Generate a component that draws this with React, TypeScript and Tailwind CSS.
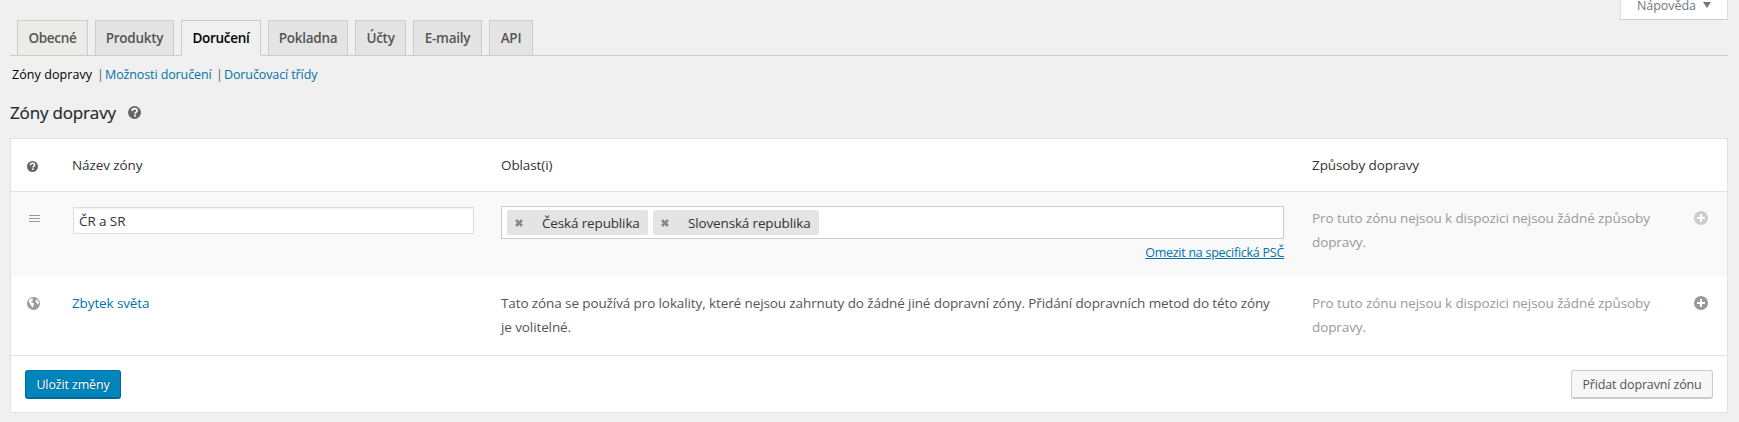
interface Tab {
  label: string;
  className: string;
}

const TABS: Tab[] = [
  { label: "Obecné", className: "w-[71px] bg-[#ebebe8] text-[#555]" },
  { label: "Produkty", className: "w-[79px] bg-[#e4e4e4] text-[#555]" },
  { label: "Doručení", className: "w-20 bg-[#f0f0f0] text-black border-b-[#f0f0f0]" },
  { label: "Pokladna", className: "w-20 bg-[#e4e4e4] text-[#555]" },
  { label: "Účty", className: "w-[51px] bg-[#e4e4e4] text-[#555]" },
  { label: "E-maily", className: "w-[69px] bg-[#e4e4e4] text-[#555]" },
  { label: "API", className: "w-11 bg-[#e4e4e4] text-[#555]" },
];

const REGIONS = [
  { name: "Česká republika", className: "w-[141px]" },
  { name: "Slovenská republika", className: "w-[166px]" },
];

function HelpIcon({ className }: { className: string }) {
  return (
    <svg viewBox="0 0 16 16" className={className}>
      <circle cx="8" cy="8" r="8" fill="#666" />
      <path d="M5 6.200C5 4.200 6.300 3.300 8.100 3.300s3 1 3 2.600c0 2-2.500 2-2.500 3.700" fill="none" stroke="#fff" strokeWidth="2.100" />
      <rect x="7.400" y="10.700" width="2.300" height="2.300" fill="#fff" />
    </svg>
  );
}

function PlusIcon({ className }: { className: string }) {
  return (
    <svg viewBox="0 0 14 14" className={className}>
      <circle cx="7" cy="7" r="7" fill="currentColor" />
      <path d="M7 3v8M3 7h8" stroke="#fff" strokeWidth="2" />
    </svg>
  );
}

function GlobeIcon() {
  return (
    <svg viewBox="0 0 13 13" className="h-[13px] w-[13px]">
      <circle cx="6.500" cy="6.500" r="6.500" fill="#999" />
      <path d="M1.300 4.400L2.600 2.400l1.800-1.100h1.500L5.200 2.300l1.200.5-1.300 1.400-1 .2.300 1h1.400l1.400 1.500-.7 1.500L5 11.300 4.400 8.800 2.900 7.100 2.300 5.200z" fill="#fff" />
      <path d="M9 2.500l1.400.3 1.500 2.500-.2 1.800-1 .5-.5-1.400-1.300-.6-.4-1.400z" fill="#fff" />
    </svg>
  );
}

function NoMethods() {
  return (
    <p className="w-[350px] leading-6 tracking-[-0.09px] text-[#999]">
      Pro tuto zónu nejsou k dispozici nejsou žádné způsoby
      <br />
      dopravy.
    </p>
  );
}

export default function App() {
  return (
    <div className="h-[422px] w-full overflow-hidden whitespace-nowrap bg-[#f0f0f0] pl-2.5 pr-[11px] font-['Open_Sans',sans-serif] text-[#333]">
      {/* Help toggle */}
      <div className="flex h-5 justify-end">
        <button className="flex h-5 w-[108px] items-start border border-t-0 border-[#ddd] border-b-[#ccc] bg-white pl-4 text-[12.5px] leading-[12px] tracking-[-0.05px] text-[#72777c]">
          <span className="w-[66px] text-left">Nápověda</span>
          <svg viewBox="0 0 8 6" className="mt-0.5 h-1.5 w-2">
            <path d="M0 0h8L4 6z" fill="#72777c" />
          </svg>
        </button>
      </div>

      {/* Tabs */}
      <nav className="flex h-9 gap-[7px] border-b border-[#ccc] pl-[7px]">
        {TABS.map((tab) => (
          <a
            key={tab.label}
            className={`h-9 shrink-0 border border-[#ccc] text-center text-[13.5px] font-semibold leading-[35px] tracking-[-0.27px] ${tab.className}`}
          >
            {tab.label}
          </a>
        ))}
      </nav>

      <ul className="mt-2 flex h-5 pl-0.5 text-[12.5px] leading-[21px] tracking-[-0.11px]">
        <li className="w-[85px] tracking-[0.07px] text-black">Zóny dopravy</li>
        <li className="flex w-[119px] text-[#0073aa]">
          <span className="w-2 text-[#666]">|</span>Možnosti doručení
        </li>
        <li className="flex text-[#0073aa]">
          <span className="w-2 text-[#666]">|</span>Doručovací třídy
        </li>
      </ul>

      <h2 className="mt-[17px] flex h-6 items-center text-[17px] font-medium leading-6 tracking-[-0.16px] text-[#23282d] [-webkit-text-stroke:0.2px_#23282d]">
        <span className="w-[118px]">Zóny dopravy</span>
        <HelpIcon className="-mt-px h-[13px] w-[13px]" />
      </h2>

      {/* Zones table */}
      <section className="mt-[13px] h-[275px] border border-[#e2e2e2] bg-white text-[13.5px]">
        <div className="flex h-[53px] border-b border-[#e1e1e1] leading-[53px] tracking-[-0.1px]">
          <div className="flex w-[61px] items-center pl-4">
            <HelpIcon className="mt-[3px] h-[11px] w-[11px]" />
          </div>
          <div className="w-[429px]">Název zóny</div>
          <div className="w-[811px]">Oblast(i)</div>
          <div>Způsoby dopravy</div>
        </div>

        <div className="flex h-[85px] bg-[#f9f9f9]">
          <div className="w-[61px] pl-[18px] pt-[23px]">
            <svg viewBox="0 0 11 7" className="h-[7px] w-[11px]">
              <path d="M0 .5h11M0 3.500h11M0 6.500h11" stroke="#999" />
            </svg>
          </div>
          <div className="w-[429px] pl-px pt-[15px]">
            <div className="h-[27px] w-[401px] border border-[#ddd] bg-white pl-[5px] leading-[27px] tracking-[-0.1px] shadow-[inset_0_1px_2px_rgba(0,0,0,0.07)]">
              ČR a SR
            </div>
          </div>
          <div className="w-[811px] pt-3.5">
            <div className="flex h-[33px] w-[783px] gap-[5px] border border-[#ccc] bg-white pl-[5px] pt-[3px]">
              {REGIONS.map((region) => (
                <div
                  key={region.name}
                  className={`flex h-[25px] items-center rounded-[2px] bg-[#e4e4e4] pl-2 leading-[26px] tracking-[-0.15px] ${region.className}`}
                >
                  <svg viewBox="0 0 8 8" className="mr-[19px] h-2 w-2">
                    <path d="M1 1l6 6M7 1L1 7" stroke="#888" strokeWidth="2.500" />
                  </svg>
                  {region.name}
                </div>
              ))}
            </div>
            <a className="block h-5 w-[783px] pt-1 text-right text-[12.5px] leading-5 tracking-[-0.26px] text-[#0073aa] underline">
              Omezit na specifická PSČ
            </a>
          </div>
          <div className="w-[382px] pt-3.5">
            <NoMethods />
          </div>
          <PlusIcon className="mt-[19px] h-3.5 w-3.5 text-[#ccc]" />
        </div>

        <div className="flex h-[79px] border-b border-[#e1e1e1]">
          <div className="w-[61px] pl-4 pt-5">
            <GlobeIcon />
          </div>
          <div className="w-[429px] pt-3.5 leading-6 tracking-[-0.12px] text-[#0073aa]">Zbytek světa</div>
          <p className="w-[811px] pt-3.5 leading-6 tracking-[-0.105px] text-[#555]">
            Tato zóna se používá pro lokality, které nejsou zahrnuty do žádné jiné dopravní zóny. Přidání dopravních metod do této zóny
            <br />
            je volitelné.
          </p>
          <div className="w-[382px] pt-3.5">
            <NoMethods />
          </div>
          <PlusIcon className="mt-[19px] h-3.5 w-3.5 text-[#999]" />
        </div>

        <div className="flex justify-between px-3.5 pt-3.5 text-[12.5px] tracking-[-0.14px]">
          <button className="h-[29px] w-24 rounded-[3px] border border-b-2 border-[#006799] border-t-[#0073aa] bg-[#0085ba] pt-px leading-[26px] text-white [text-shadow:0_-1px_1px_#006799,1px_0_1px_#006799]">
            Uložit změny
          </button>
          <button className="h-[29px] w-[142px] rounded-[3px] border border-b-2 border-[#ccc] bg-[#f7f7f7] pt-px leading-[26px] text-[#555]">
            Přidat dopravní zónu
          </button>
        </div>
      </section>
    </div>
  );
}
